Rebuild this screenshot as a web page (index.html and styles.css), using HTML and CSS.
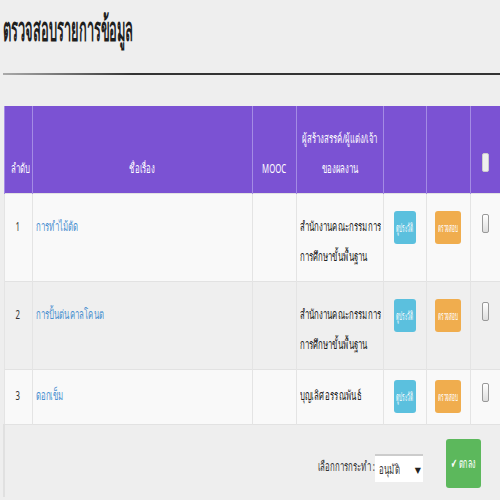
FILE: index.html
```html
<!DOCTYPE html>
<html lang="th">
<head>
  <meta charset="UTF-8" />
  <title>ตรวจสอบรายการข้อมูล</title>
  <link rel="stylesheet" href="styles.css">
</head>
<body>
  <h2 class="page-title"><span class="sq">ตรวจสอบรายการข้อมูล</span></h2>
  <div class="title-line"></div>

  <table class="list">
    <thead>
      <tr>
        <th class="c-no"><span class="sq">ลำดับ</span></th>
        <th class="c-name"><span class="sq">ชื่อเรื่อง</span></th>
        <th class="c-mooc"><span class="sq">MOOC</span></th>
        <th class="c-owner"><div class="sq-box">ผู้สร้างสรรค์/ผู้แต่ง/เจ้า<br>ของผลงาน</div></th>
        <th class="c-btn"></th>
        <th class="c-btn2"></th>
        <th class="c-chk"><span class="chk"></span></th>
      </tr>
    </thead>
    <tbody>
      <tr class="r-tall">
        <td class="c-no"><span class="sq">1</span></td>
        <td class="txt"><a href="#" class="sq">การทำไม้ตัด</a></td>
        <td></td>
        <td><div class="sq-box left">สำนักงานคณะกรรมการการศึกษาขั้นพื้นฐาน</div></td>
        <td class="c-btn"><span class="btn btn-info"><span class="sq">ดูประวัติ</span></span></td>
        <td class="c-btn2"><span class="btn btn-warn"><span class="sq">ตรวจสอบ</span></span></td>
        <td class="c-chk"><span class="chk"></span></td>
      </tr>
      <tr class="r-tall odd">
        <td class="c-no"><span class="sq">2</span></td>
        <td class="txt"><a href="#" class="sq">การปั้นต่นคาลโคนต</a></td>
        <td></td>
        <td><div class="sq-box left">สำนักงานคณะกรรมการการศึกษาขั้นพื้นฐาน</div></td>
        <td class="c-btn"><span class="btn btn-info"><span class="sq">ดูประวัติ</span></span></td>
        <td class="c-btn2"><span class="btn btn-warn"><span class="sq">ตรวจสอบ</span></span></td>
        <td class="c-chk"><span class="chk"></span></td>
      </tr>
      <tr class="r-short">
        <td class="c-no"><span class="sq">3</span></td>
        <td class="txt"><a href="#" class="sq">ดอกเข็ม</a></td>
        <td></td>
        <td class="txt"><span class="sq">บุญเลิศ อรรณพันธ์</span></td>
        <td class="c-btn"><span class="btn btn-info"><span class="sq">ดูประวัติ</span></span></td>
        <td class="c-btn2"><span class="btn btn-warn"><span class="sq">ตรวจสอบ</span></span></td>
        <td class="c-chk"><span class="chk"></span></td>
      </tr>
    </tbody>
    <tfoot>
      <tr>
        <td colspan="7">
          <div class="actions">
            <span class="action-label"><span class="sq">เลือกการกระทำ :</span></span>
            <span class="select"><span class="sq">อนุมัติ</span><span class="caret">▼</span></span>
            <span class="btn btn-ok"><span class="sq">✔ ตกลง</span></span>
          </div>
        </td>
      </tr>
    </tfoot>
  </table>
</body>
</html>
```

FILE: styles.css
```css
body {
  margin: 0;
  padding: 0 0 0 3px;
  background: #eeeeee;
  font-family: "Noto Sans", "DejaVu Sans", sans-serif;
  color: #333;
  overflow: hidden;
  width: 520px;
}
.sq {
  display: inline-block;
  white-space: nowrap;
  transform: scaleX(0.6);
  transform-origin: center;
}
.sq-box {
  width: 140px;
  margin-left: -27px;
  transform: scaleX(0.6);
  line-height: 30px;
}
.sq-box.left {
  margin-left: -28px;
  color: #222;
}
.page-title {
  margin: 0;
  height: 60px;
  padding-top: 8px;
  font-size: 34px;
  line-height: 40px;
  color: #1e1e1e;
}
.page-title .sq {
  transform: scaleX(0.38);
  transform-origin: left;
}
.title-line {
  height: 2px;
  margin-top: 5px;
  background: linear-gradient(to right, #aaa, #333 25%, #333);
}
.list {
  margin-top: 31px;
  border-collapse: collapse;
  width: 520px;
  table-layout: fixed;
  font-size: 13px;
}
.list th, .list td {
  box-sizing: border-box;
}
.list th {
  background: #7b52d3;
  color: #fff;
  font-weight: normal;
  height: 87px;
  vertical-align: bottom;
  padding: 0 0 10px;
  line-height: 30px;
  border-left: 1px solid #a48be4;
  text-align: center;
}
.c-no { width: 28px; }
.c-name { width: 220px; }
.c-mooc { width: 44px; }
.c-owner { width: 87px; }
.c-btn { width: 43px; }
.c-btn2 { width: 44px; }
.list td {
  background: #f9f9f9;
  border-left: 1px solid #e4e4e4;
  border-top: 1px solid #e2e2e2;
  vertical-align: top;
  padding: 17px 3px 0;
  line-height: 30px;
}
.list tr.odd td {
  background: #efefef;
}
.list .r-tall td { height: 88px; }
.list .r-short td {
  height: 55px;
  padding-top: 10px;
}
.list td.c-no { text-align: center; }
.list td.c-btn, .list td.c-btn2 {
  text-align: center;
  line-height: normal;
  padding-left: 0;
  padding-right: 0;
}
.list .c-chk {
  text-align: left;
  line-height: normal;
  padding-left: 11px;
  padding-right: 0;
}
.list td.txt .sq {
  transform-origin: left;
}
.list td.txt {
  color: #222;
}
.list a {
  color: #4a8fd0;
  text-decoration: none;
}
.btn {
  display: inline-block;
  border-radius: 3px;
  color: #fff;
  font-size: 12px;
  height: 33px;
  line-height: 33px;
  overflow: hidden;
  white-space: nowrap;
  text-align: center;
}
.btn-info {
  background: #5bc0de;
  width: 22px;
}
.btn-warn {
  background: #f0ad4e;
  width: 26px;
}
.btn .sq {
  transform: scaleX(0.4);
  margin: 0 -30px;
}
.chk {
  display: inline-block;
  width: 5px;
  height: 17px;
  border: 1px solid #999;
  border-radius: 2px;
  background: linear-gradient(#fff, #ddd);
  margin-top: 3px;
}
.list th .chk {
  background: #eee;
  border-color: #ccc;
  margin-bottom: 7px;
}
.list tfoot td {
  background: #eeeeee;
  border-top: 1px solid #e2e2e2;
  border-left: 2px solid #e0e0e0;
  padding: 14px 0 0;
  height: 73px;
  line-height: normal;
}
.actions {
  display: flex;
  align-items: center;
  margin-left: 327px;
}
.action-label {
  display: flex;
  justify-content: flex-end;
  width: 43px;
  font-size: 13px;
  padding-top: 6px;
}
.action-label .sq {
  flex-shrink: 0;
  transform-origin: right;
}
.select {
  display: flex;
  align-items: center;
  justify-content: space-between;
  box-sizing: border-box;
  width: 48px;
  height: 28px;
  padding: 0 2px 0 4px;
  background: #fff;
  border-top: 2px solid #ccc;
  font-size: 13px;
  margin-top: 10px;
  overflow: hidden;
}
.select .sq {
  transform-origin: left;
}
.caret {
  font-size: 8px;
  color: #222;
}
.btn-ok {
  background: #5cb85c;
  width: 35px;
  height: 49px;
  line-height: 49px;
  margin-left: 23px;
  font-size: 13px;
}
.btn-ok .sq {
  transform: scaleX(0.55);
  margin: 0 -20px;
}
```
